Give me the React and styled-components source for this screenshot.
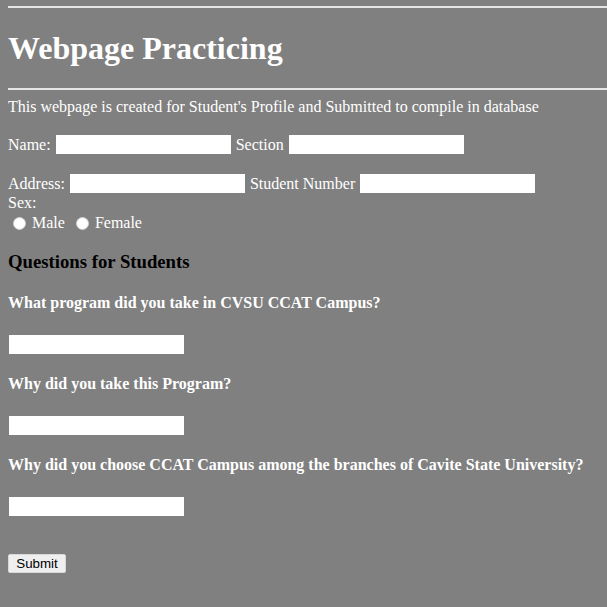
import React from 'react';
import styled, { createGlobalStyle } from 'styled-components';

const GlobalStyle = createGlobalStyle`
  html, body {
    margin: 0;
    padding: 0;
    background: #808080;
  }
  body {
    font-family: "Liberation Serif", "Times New Roman", serif;
    font-size: 16px;
    color: #ffffff;
  }
`;

const Page = styled.div`
  padding: 6px 0 30px 8px;
  display: flex;
  flex-direction: column;
  align-items: flex-start;
`;

const Rule = styled.div`
  align-self: stretch;
  height: 2px;
  background: #e6e6e6;
`;

const Title = styled.h1`
  margin: ${p => p.$top}px 0 ${p => p.$bottom}px;
  font-size: 32px;
  line-height: 37px;
  font-weight: bold;
`;

const Intro = styled.p`
  margin: 8px 0 0;
  line-height: 18px;
`;

const Row = styled.div`
  display: flex;
  align-items: center;
  height: 21px;
  margin-top: ${p => p.$top || 0}px;
  line-height: 18px;
`;

const Label = styled.span`
  margin-right: 5px;
`;

const TextBox = styled.input.attrs({ type: 'text' })`
  width: 175px;
  height: 19px;
  box-sizing: border-box;
  border: none;
  background: #ffffff;
  margin: 0 ${p => p.$right || 0}px 0 0;
  padding: 0;
  outline: none;
`;

const Line = styled.div`
  line-height: 19px;
  margin-top: -1px;
`;

const RadioGroup = styled.div`
  display: flex;
  align-items: center;
  height: 20px;
  margin-top: 1px;
`;

const Radio = styled.input.attrs({ type: 'radio' })`
  appearance: none;
  width: 13px;
  height: 13px;
  border-radius: 50%;
  background: #ffffff;
  border: 1px solid #d0d0d0;
  box-sizing: border-box;
  margin: 0 6px 0 ${p => p.$left || 5}px;
`;

const SectionHead = styled.h3`
  margin: 18px 0 0;
  font-size: 18.72px;
  line-height: 21px;
  color: #000000;
  font-weight: bold;
`;

const Question = styled.h4`
  margin: ${p => p.$top}px 0 0;
  font-size: 16px;
  line-height: 18px;
  font-weight: bold;
`;

const Answer = styled(TextBox)`
  margin-top: 23px;
  margin-left: 1px;
`;

const SubmitButton = styled.button`
  margin-top: 38px;
  width: 58px;
  height: 19px;
  padding: 0;
  font-family: "Liberation Sans", Arial, sans-serif;
  font-size: 13.33px;
  color: #000000;
  background: #efefef;
  border: 1px solid #d8d8d8;
  border-radius: 2px;
`;

export default function App() {
  return (
    <>
      <GlobalStyle />
      <Page>
        <Rule />
        <Title $top={22} $bottom={21}>Webpage Practicing</Title>
        <Rule />
        <Intro>This webpage is created for Student's Profile and Submitted to compile in database</Intro>

        <Row $top={18}>
          <Label>Name:</Label>
          <TextBox $right={5} />
          <Label>Section</Label>
          <TextBox />
        </Row>
        <Row $top={18}>
          <Label>Address:</Label>
          <TextBox $right={5} />
          <Label>Student Number</Label>
          <TextBox />
        </Row>
        <Line>Sex:</Line>
        <RadioGroup>
          <Radio name="sex" />
          <span>Male</span>
          <Radio name="sex" $left={11} />
          <span>Female</span>
        </RadioGroup>

        <SectionHead>Questions for Students</SectionHead>

        <Question $top={22}>What program did you take in CVSU CCAT Campus?</Question>
        <Answer />
        <Question $top={21}>Why did you take this Program?</Question>
        <Answer />
        <Question $top={21}>Why did you choose CCAT Campus among the branches of Cavite State University?</Question>
        <Answer />

        <SubmitButton>Submit</SubmitButton>
      </Page>
    </>
  );
}
